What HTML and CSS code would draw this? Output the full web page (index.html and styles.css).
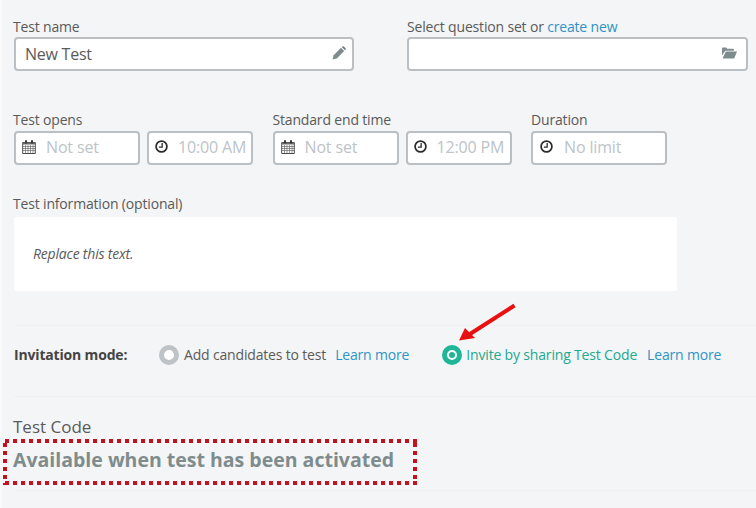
FILE: index.html
```html
<!DOCTYPE html>
<html lang="en">
<head>
  <meta charset="UTF-8">
  <title>Test settings</title>
  <link rel="stylesheet" href="styles.css">
</head>
<body>
  <div class="page">
    <div class="row row-name">
      <div class="field">
        <label class="lbl">Test name</label>
        <div class="box w-name">
          <span class="val">New Test</span>
          <svg class="ico-right" width="14" height="14" viewBox="0 0 14 14"><path d="M.6 13.400l1-4.200 7.400-7.400 3.200 3.200-7.400 7.400z" fill="#7f8c8d"/><path d="M9.800 1l.7-.6c.4-.3 .9-.3 1.200 0l1.900 1.900c.3 .3 .3 .8 0 1.200l-.6.7z" fill="#6d7a7b"/></svg>
        </div>
      </div>
      <div class="field">
        <label class="lbl">Select question set or <a class="lnk">create new</a></label>
        <div class="box w-set">
          <svg class="ico-right" width="15" height="12" viewBox="0 0 15 12"><path d="M0 1.500C0 1 .4.600 1 .600h3.200l1 1.200H11c.5 0 .9 .4 .9 .9v1H3.300L0 8.500z" fill="#7f8c8d"/><path d="M3.800 4.600H15l-2.800 6.800H.6z" fill="#7f8c8d"/></svg>
        </div>
      </div>
    </div>

    <div class="row row-times">
      <div class="field">
        <label class="lbl">Test opens</label>
        <div class="pair">
          <div class="box w-date">
            <svg class="ico" width="14" height="14" viewBox="0 0 14 14"><use href="#cal"/></svg>
            <span class="ph">Not set</span>
          </div>
          <div class="box w-time">
            <svg class="ico" width="13" height="13" viewBox="0 0 12 12"><use href="#clock"/></svg>
            <span class="ph">10:00 AM</span>
          </div>
        </div>
      </div>
      <div class="field">
        <label class="lbl">Standard end time</label>
        <div class="pair">
          <div class="box w-date">
            <svg class="ico" width="14" height="14" viewBox="0 0 14 14"><use href="#cal"/></svg>
            <span class="ph">Not set</span>
          </div>
          <div class="box w-time">
            <svg class="ico" width="13" height="13" viewBox="0 0 12 12"><use href="#clock"/></svg>
            <span class="ph">12:00 PM</span>
          </div>
        </div>
      </div>
      <div class="field">
        <label class="lbl">Duration</label>
        <div class="box w-dur">
          <svg class="ico" width="13" height="13" viewBox="0 0 12 12"><use href="#clock"/></svg>
          <span class="ph">No limit</span>
        </div>
      </div>
    </div>

    <div class="info">
      <label class="lbl">Test information (optional)</label>
      <div class="info-box"><em>Replace this text.</em></div>
    </div>

    <div class="mode">
      <b class="mode-title">Invitation mode:</b>
      <span class="radio"></span>
      <span class="opt">Add candidates to test</span>
      <a class="lnk more">Learn more</a>
      <span class="radio on"></span>
      <span class="opt opt-on">Invite by sharing Test Code</span>
      <a class="lnk more">Learn more</a>
    </div>

    <div class="code">
      <div class="code-title">Test Code</div>
      <div class="code-val">Available when test has been activated</div>
    </div>

    <svg class="arrow" width="64" height="46" viewBox="0 0 64 46"><path d="M60.500 4.500L16 33" stroke="#e81010" stroke-width="4" fill="none"/><path d="M5 39.500l6-12.500 10 10z" fill="#e81010"/></svg>
  </div>

  <svg width="0" height="0" class="defs">
    <symbol id="cal" viewBox="0 0 14 14">
      <path d="M.7 2.500h12.600v11H.7z" fill="#fff" stroke="#4a4a4a" stroke-width="1"/>
      <path d="M1 6.500h12M1 8.500h12M1 10.500h12M3.500 5v8M6 5v8M8.500 5v8M11 5v8" stroke="#6a6a6a" stroke-width=".7"/>
      <path d="M.7 2.500h12.600V4.500H.7z" fill="#6a6a6a"/>
      <path d="M3 .3h2v3.200H3zM9 .3h2v3.200H9z" fill="#3a3a3a"/>
    </symbol>
    <symbol id="clock" viewBox="0 0 12 12">
      <circle cx="6" cy="6" r="5" fill="none" stroke="#2b2b2b" stroke-width="1.600"/>
      <path d="M6.600 2.800v3.700H3.600" fill="none" stroke="#2b2b2b" stroke-width="1.200"/>
    </symbol>
  </svg>
</body>
</html>
```
FILE: styles.css
```css
* { box-sizing: border-box; }
body {
  margin: 0;
  background: #f4f5f6;
  font-family: "Open Sans", "Liberation Sans", sans-serif;
  font-size: 14px;
  color: #5a5a5a;
  letter-spacing: -0.17px;
}
.page {
  position: relative;
  height: 508px;
  overflow: hidden;
  padding: 17px 0 0 12px;
  border-left: 2px solid #fafafa;
}
.defs { position: absolute; }
.lbl { display: block; height: 20px; line-height: 19px; white-space: nowrap; }
.field:first-child .lbl, .info .lbl { margin-left: -1px; }
.row-times .lbl, .info .lbl { line-height: 17px; }
.lnk { color: #2e93c5; }

.row { display: flex; }
.row-name { gap: 53px; }
.row-times { margin-top: 40px; gap: 19.5px; }
.pair { display: flex; gap: 7px; }

.box {
  display: flex;
  align-items: center;
  height: 34px;
  background: #fff;
  border: 2px solid #b9bfc3;
  border-radius: 4px;
  white-space: nowrap;
}
.w-name { width: 340px; padding: 0 6px 0 9px; }
.w-set { width: 341px; padding: 0 9px; }
.w-date { width: 126px; padding: 0 0 2px 6px; }
.w-time { width: 106px; padding: 0 0 2px 6px; }
.w-dur { width: 136px; padding: 0 0 2px 7px; }
.val { font-size: 16px; letter-spacing: -0.25px; }
.ph { font-size: 16px; color: #bdc3c7; margin-left: 10px; letter-spacing: -0.15px; }
.w-dur .ph { margin-left: 11px; }
.ico { margin-top: -1px; }
.ico-right { margin-left: auto; margin-top: -3px; }

.info { margin-top: 30px; }
.info-box {
  width: 663px;
  height: 74px;
  margin-top: 2px;
  padding: 0 19px 1px;
  display: flex;
  align-items: center;
  background: #fff;
  border-radius: 3px;
  letter-spacing: -0.2px;
}

.mode {
  display: flex;
  align-items: center;
  height: 72px;
  margin-top: 34px;
  padding-bottom: 13px;
  border-top: 1px solid #eef0f1;
  border-bottom: 1px solid #eef0f1;
}
.mode-title { width: 145px; color: #444; }
.radio {
  width: 20px;
  height: 20px;
  border: 5px solid #bdc3c7;
  border-radius: 50%;
  background: #fff;
  margin-right: 5px;
}
.radio.on { border-color: #1fb698; position: relative; margin-left: 33px; margin-right: 4px; }
.radio.on::after {
  content: "";
  position: absolute;
  left: 2px;
  top: 2px;
  width: 6px;
  height: 6px;
  border-radius: 50%;
  background: #1fb698;
}
.opt-on { color: #22a98f; }
.more { margin-left: 9px; }
.opt-on + .more { margin-left: 10px; }

.code { margin-top: 17px; padding-bottom: 5px; border-bottom: 1px solid #eef0f1; }
.code-title { font-size: 17px; line-height: 25px; margin-left: -1px; letter-spacing: 0; }
/* square dots, a css dotted border draws circles */
.code-val {
  --dot: #c5101f;
  margin-left: -11px;
  width: 414px;
  height: 46px;
  padding-left: 10px;
  line-height: 42px;
  font-size: 19.5px;
  font-weight: 700;
  color: #7f8c8d;
  letter-spacing: 0;
  white-space: nowrap;
  background:
    linear-gradient(90deg, var(--dot) 50%, transparent 50%) 2px 0 / 8px 4px repeat-x,
    linear-gradient(90deg, var(--dot) 50%, transparent 50%) 2px 100% / 8px 4px repeat-x,
    linear-gradient(180deg, var(--dot) 50%, transparent 50%) 0 4px / 4px 8px repeat-y,
    linear-gradient(180deg, var(--dot) 50%, transparent 50%) 100% 4px / 4px 8px repeat-y;
}
.arrow { position: absolute; left: 452px; top: 301px; }
```
